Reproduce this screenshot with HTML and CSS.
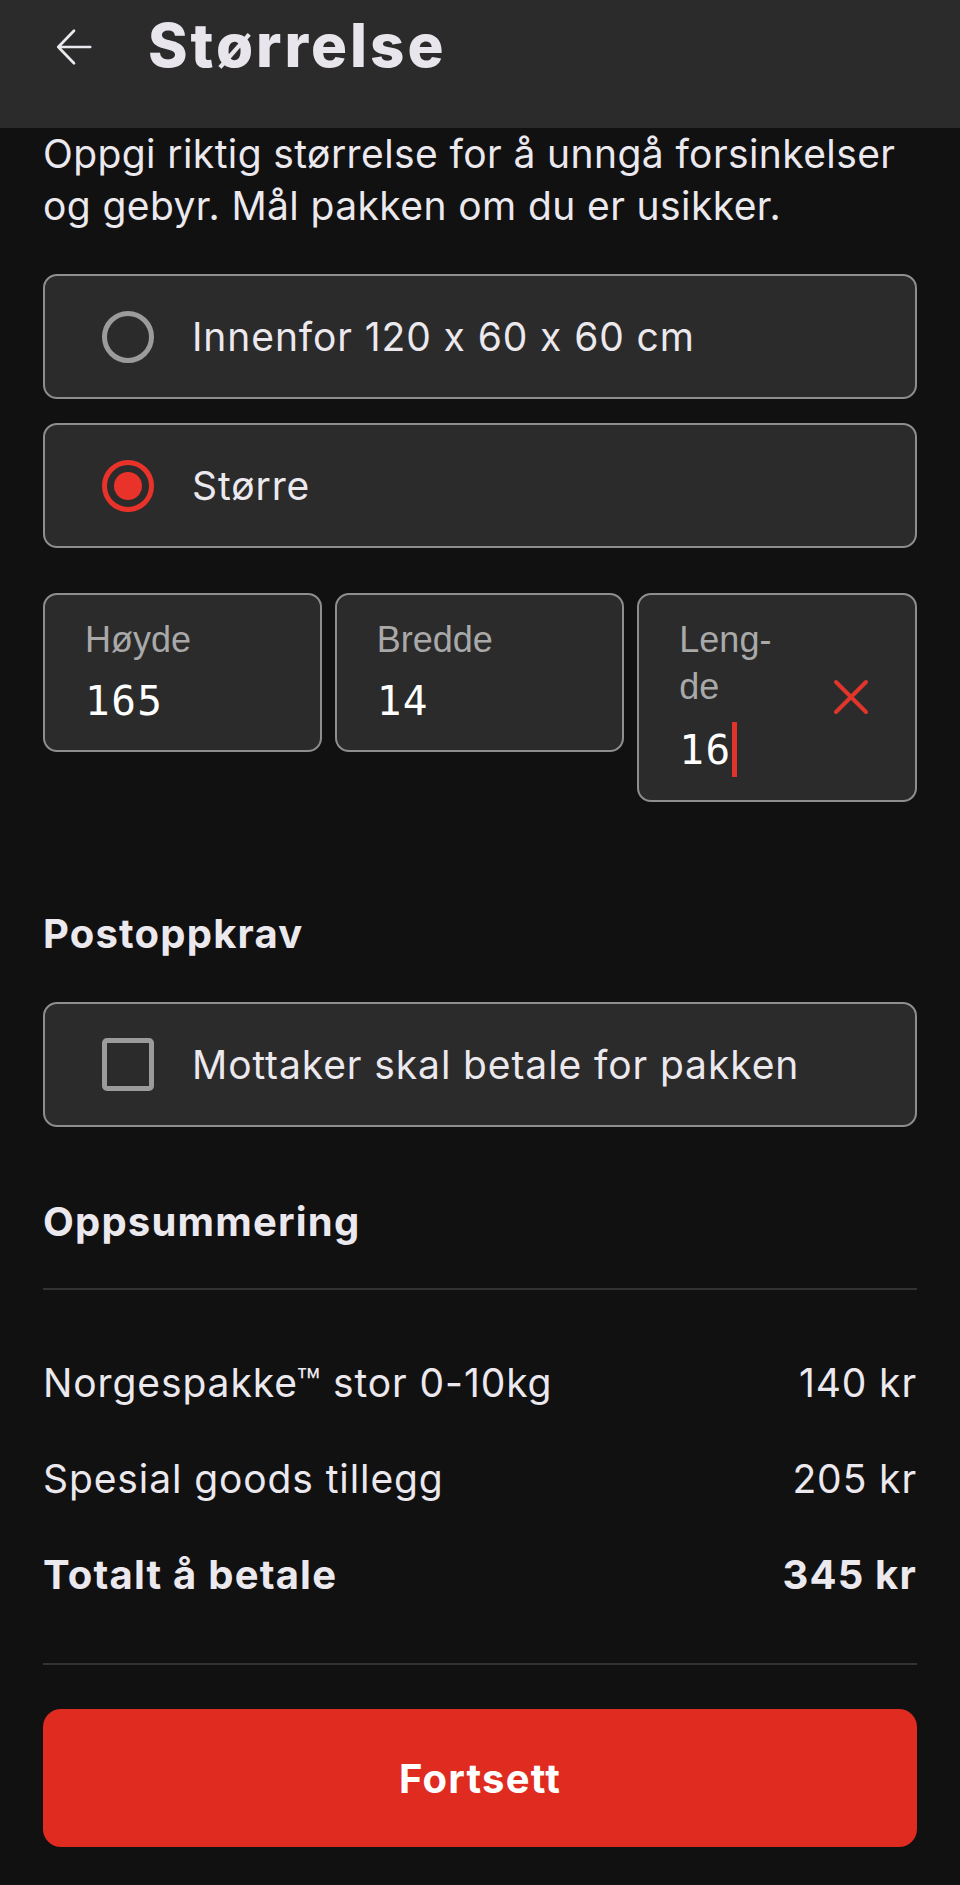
FILE: index.html
```html
<!DOCTYPE html>
<html lang="no">

<head>
    <meta name="viewport" content="width=device-width, initial-scale=1.0">
    <meta charset="UTF-8">
    <title>Størrelse</title>
    <link rel="stylesheet" href="styles.css">
</head>

<body>

    <header class="topbar">
        <div class="topbar_row">
            <button class="back_button" aria-label="Tilbake">
                <svg width="40" height="40" viewBox="0 0 40 40" fill="none" stroke="currentColor" stroke-width="3" stroke-linecap="round" stroke-linejoin="round">
                    <path d="M38 20H2.5M20 2L2.5 20L20 38" />
                </svg>
            </button>
            <h1>Størrelse</h1>
        </div>
    </header>

    <main id="container">
        <p class="intro">Oppgi riktig størrelse for å unngå forsinkelser og gebyr. Mål pakken om du er usikker.</p>

        <div class="options">
            <div class="option">
                <span class="radio"></span>
                <span class="option_txt">Innenfor 120 x 60 x 60 cm</span>
            </div>
            <div class="option">
                <span class="radio checked"></span>
                <span class="option_txt">Større</span>
            </div>
        </div>

        <div class="dims">
            <div class="field">
                <div class="field_body">
                    <span class="field_label">Høyde</span>
                    <span class="field_value">165</span>
                </div>
            </div>
            <div class="field">
                <div class="field_body">
                    <span class="field_label">Bredde</span>
                    <span class="field_value">14</span>
                </div>
            </div>
            <div class="field active">
                <div class="field_body">
                    <span class="field_label">Leng-<br>de</span>
                    <span class="field_value">16<span class="caret"></span></span>
                </div>
                <button class="clear_button" aria-label="Tøm">
                    <svg width="36" height="36" viewBox="0 0 36 36" fill="none" stroke="currentColor" stroke-width="4" stroke-linecap="round">
                        <path d="M3 3L33 33M33 3L3 33" />
                    </svg>
                </button>
            </div>
        </div>

        <h2 class="section_title cod_title">Postoppkrav</h2>
        <div class="option">
            <span class="checkbox"></span>
            <span class="option_txt">Mottaker skal betale for pakken</span>
        </div>

        <h2 class="section_title sum_title">Oppsummering</h2>
        <hr class="divider">

        <div class="summary">
            <div class="sum_row">
                <span>Norgespakke™ stor 0-10kg</span>
                <span>140 kr</span>
            </div>
            <div class="sum_row">
                <span>Spesial goods tillegg</span>
                <span>205 kr</span>
            </div>
            <div class="sum_row total">
                <span>Totalt å betale</span>
                <span>345 kr</span>
            </div>
        </div>

        <hr class="divider bottom">

        <button class="next_button">Fortsett</button>
    </main>

</body>

</html>
```

FILE: styles.css
```css
body {
    margin: 0;
    background-color: #111111;
    color: #ebe8ee;
    font-family: 'Inter', 'Noto Sans', sans-serif;
    font-feature-settings: "calt" 0;
}

button {
    font-family: inherit;
    font-feature-settings: inherit;
    background-color: transparent;
    border-color: transparent;
    padding: 0;
    cursor: pointer;
}

.topbar {
    height: 128px;
    background-color: #2b2b2b;
    padding-left: 54px;
}

.topbar_row {
    display: flex;
    align-items: center;
    height: 90px;
}

.back_button {
    display: flex;
    color: #ebe8ee;
    width: 40px;
    height: 40px;
}

.topbar h1 {
    margin: 0 0 0 54px;
    font-size: 60px;
    line-height: 90px;
    font-weight: 800;
    letter-spacing: 3px;
    color: #e8e5ec;
}

#container {
    padding: 0 43px 37px;
}

.intro {
    margin: 0 -6px 0 0;
    font-size: 39px;
    line-height: 52px;
    letter-spacing: 0.4px;
}

.options {
    display: flex;
    flex-direction: column;
    gap: 24px;
    margin-top: 42px;
}

.option {
    display: flex;
    align-items: center;
    gap: 38px;
    height: 125px;
    box-sizing: border-box;
    padding-left: 57px;
    background-color: #2b2b2b;
    border: 2px solid #8e8e8e;
    border-radius: 14px;
}

.option_txt {
    font-size: 39px;
    letter-spacing: 0.9px;
}

.radio {
    position: relative;
    width: 52px;
    height: 52px;
    box-sizing: border-box;
    border: 5px solid #9b9b9b;
    border-radius: 50%;
    flex-shrink: 0;
}

.radio.checked {
    border-color: #e8322a;
}

.radio.checked::after {
    content: "";
    position: absolute;
    left: 7px;
    top: 7px;
    width: 28px;
    height: 28px;
    border-radius: 50%;
    background-color: #e8322a;
}

.checkbox {
    width: 52px;
    height: 53px;
    box-sizing: border-box;
    border: 5px solid #9b9b9b;
    border-radius: 5px;
    flex-shrink: 0;
}

/* mål */

.dims {
    display: grid;
    grid-template-columns: 279fr 290fr 280fr;
    gap: 13px;
    align-items: start;
    margin-top: 45px;
}

.field {
    display: flex;
    align-items: center;
    justify-content: space-between;
    padding: 21px 44px 23px 40px;
    background-color: #2b2b2b;
    border: 2px solid #8e8e8e;
    border-radius: 14px;
}

.field_body {
    display: flex;
    flex-direction: column;
}

.field_label {
    font-family: 'Liberation Sans', Arial, sans-serif;
    font-size: 36px;
    line-height: 47px;
    color: #a9a9a9;
}

.field_value {
    display: flex;
    align-items: center;
    margin-top: 12px;
    font-family: 'DejaVu Sans Mono', monospace;
    font-size: 41px;
    line-height: 52px;
    letter-spacing: 1.5px;
    color: #ffffff;
}

.caret {
    width: 5px;
    height: 55px;
    margin-left: 0;
    background-color: #e0332b;
}

.clear_button {
    display: flex;
    color: #e0352b;
}

.section_title {
    margin: 0;
    font-size: 40px;
    line-height: 48px;
    font-weight: 700;
    letter-spacing: 1.2px;
}

.cod_title {
    margin-top: 108px;
    margin-bottom: 44px;
}

.sum_title {
    margin-top: 71px;
}

.divider {
    margin: 42px 0 0;
    border: none;
    height: 2px;
    background-color: #333333;
}

.divider.bottom {
    margin-top: 62px;
}

.summary {
    display: flex;
    flex-direction: column;
    gap: 44px;
    margin-top: 67px;
}

.sum_row {
    display: flex;
    justify-content: space-between;
    font-size: 39px;
    line-height: 52px;
    letter-spacing: 0.9px;
}

.sum_row.total {
    font-size: 40px;
    font-weight: 700;
    letter-spacing: 1.2px;
}

.next_button {
    display: block;
    width: 100%;
    height: 138px;
    margin-top: 44px;
    background-color: #e02b21;
    border-radius: 18px;
    color: #ffffff;
    font-size: 40px;
    font-weight: 700;
    letter-spacing: 1.2px;
}
```
